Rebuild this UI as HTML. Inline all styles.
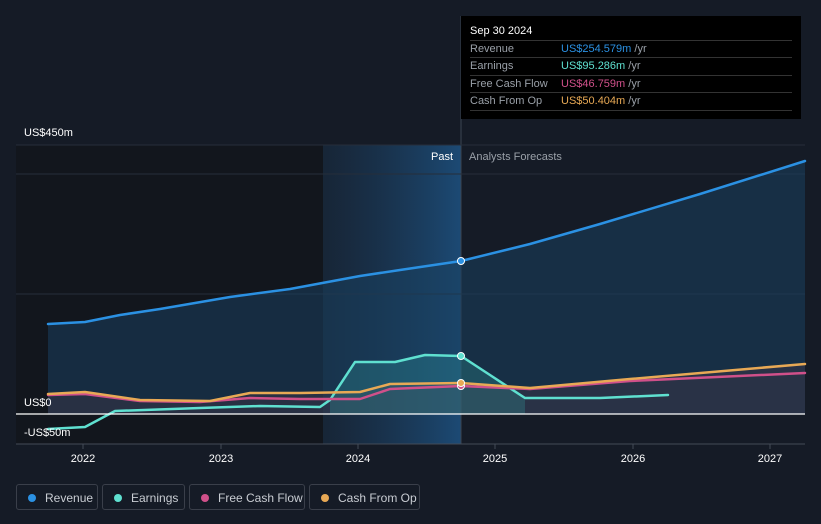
<!DOCTYPE html>
<html><head><meta charset="utf-8"><style>
body{margin:0;width:821px;height:524px;background:#151b26;font-family:"Liberation Sans",sans-serif;overflow:hidden;position:relative}
.tt{position:absolute;left:461px;top:16px;width:340px;height:103px;background:#000;color:#fff;font-size:11px}
.tt .h{position:absolute;left:9px;top:9px;font-size:11px}
.row{position:absolute;left:9px;width:322px;border-top:1px solid #333;height:17px;line-height:17px;color:#9aa0a8}
.row span{position:absolute;left:91px}
.lg{position:absolute;top:484px;height:26px;border:1px solid #3a3f4a;border-radius:3px;color:#c8ccd2;font-size:12px;line-height:26px;padding-left:28px;box-sizing:border-box}
.lg i{position:absolute;left:11px;top:9px;width:8px;height:8px;border-radius:50%}
</style></head><body>
<svg width="821" height="524" style="position:absolute;left:0;top:0">
<defs><linearGradient id="g" x1="0" x2="1"><stop offset="0" stop-color="#1a3550" stop-opacity=".4"/><stop offset="1" stop-color="#1d5282" stop-opacity=".85"/></linearGradient></defs>
<rect x="16" y="145" width="307" height="299" fill="#12161d"/>
<rect x="323" y="145" width="138" height="299" fill="url(#g)"/>
<line x1="461" y1="16" x2="461" y2="444" stroke="#3a4452"/>
<g stroke="#262e3a"><line x1="16" y1="145" x2="805" y2="145"/><line x1="16" y1="174" x2="805" y2="174"/><line x1="16" y1="294" x2="805" y2="294"/></g>
<path d="M48,324 L85,322 120,315 160,309 230,297 290,289 360,276 400,270 461,261 530,244 600,224 700,194 805,161 L805,414 L48,414Z" fill="#1a3f5e" opacity=".55"/>
<path d="M48,394 85,392 140,400 210,401 250,393 300,393 360,392 390,384 461,383 530,388 630,379 805,364 L805,414 48,414Z" fill="#4a3a48" opacity=".35"/>
<path d="M330,400 355,362 395,362 425,355 461,356 490,375 525,398 L525,414 330,414Z" fill="#3aa" opacity=".25"/>
<g fill="none" stroke-width="2.5" stroke-linejoin="round" stroke-linecap="round">
<path d="M48,324 L85,322 120,315 160,309 230,297 290,289 360,276 400,270 461,261 530,244 600,224 700,194 805,161" stroke="#2b91e3"/>
<path d="M48,429 85,427 115,411 200,408 260,406 320,407 330,400 355,362 395,362 425,355 461,356 490,375 525,398 600,398 668,395" stroke="#5fe0d0"/>
<path d="M48,395 85,394 140,401 200,402 250,398 300,399 360,399 390,389 461,386 530,389 630,381 805,373" stroke="#d0508a"/>
<path d="M48,394 85,392 140,400 210,401 250,393 300,393 360,392 390,384 461,383 530,388 630,379 805,364" stroke="#e8a955"/>
</g>
<line x1="16" y1="414" x2="805" y2="414" stroke="#fff" stroke-width="1.2"/>
<line x1="16" y1="444" x2="805" y2="444" stroke="#444b57"/>
<circle cx="461" cy="261" r="3.5" fill="#2b91e3" stroke="#fff"/>
<circle cx="461" cy="356" r="3.5" fill="#5fe0d0" stroke="#fff"/>
<circle cx="461" cy="386" r="3.5" fill="#d0508a" stroke="#fff"/>
<circle cx="461" cy="383" r="3.5" fill="#e8a955" stroke="#fff"/>
<g stroke="#444b57"><line x1="83" y1="444" x2="83" y2="449"/><line x1="221" y1="444" x2="221" y2="449"/><line x1="358" y1="444" x2="358" y2="449"/><line x1="495" y1="444" x2="495" y2="449"/><line x1="633" y1="444" x2="633" y2="449"/><line x1="770" y1="444" x2="770" y2="449"/></g>
<g font-size="11" fill="#fff" text-anchor="middle"><text x="83" y="462">2022</text><text x="221" y="462">2023</text><text x="358" y="462">2024</text><text x="495" y="462">2025</text><text x="633" y="462">2026</text><text x="770" y="462">2027</text></g>
<g font-size="11" fill="#fff"><text x="24" y="136">US$450m</text><text x="24" y="406">US$0</text><text x="24" y="436">-US$50m</text></g>
<text x="453" y="160" font-size="11" fill="#fff" text-anchor="end">Past</text>
<text x="469" y="160" font-size="11" fill="#9aa0a8">Analysts Forecasts</text>
</svg>
<div class="tt"><div class="h">Sep 30 2024</div>
<div class="row" style="top:24px">Revenue<span style="color:#2b91e3">US$254.579m <b style="color:#9aa0a8;font-weight:normal">/yr</b></span></div>
<div class="row" style="top:41px">Earnings<span style="color:#5fe0d0">US$95.286m <b style="color:#9aa0a8;font-weight:normal">/yr</b></span></div>
<div class="row" style="top:59px">Free Cash Flow<span style="color:#d0508a">US$46.759m <b style="color:#9aa0a8;font-weight:normal">/yr</b></span></div>
<div class="row" style="top:76px;border-bottom:1px solid #333">Cash From Op<span style="color:#e8a955">US$50.404m <b style="color:#9aa0a8;font-weight:normal">/yr</b></span></div>
</div>
<div class="lg" style="left:16px;width:82px"><i style="background:#2b91e3"></i>Revenue</div>
<div class="lg" style="left:102px;width:83px"><i style="background:#5fe0d0"></i>Earnings</div>
<div class="lg" style="left:189px;width:116px"><i style="background:#d0508a"></i>Free Cash Flow</div>
<div class="lg" style="left:309px;width:111px"><i style="background:#e8a955"></i>Cash From Op</div>
</body></html>
